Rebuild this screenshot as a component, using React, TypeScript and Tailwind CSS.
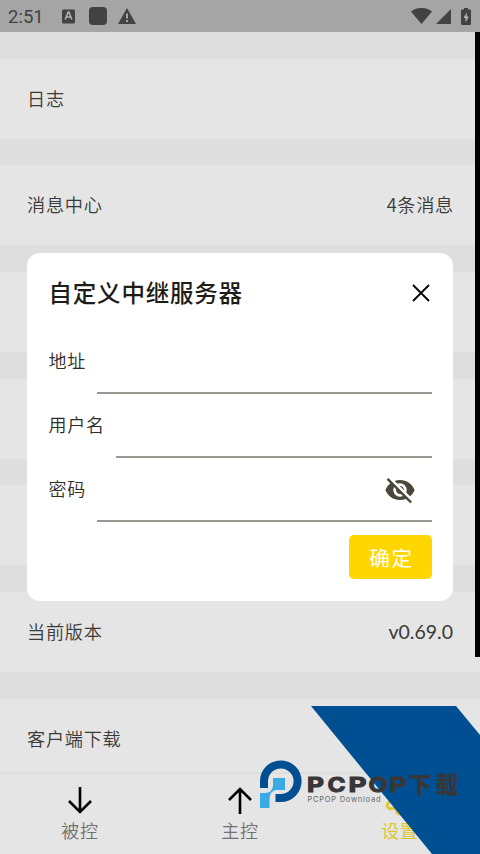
import { Settings } from "lucide-react";
import { MdVisibilityOff } from "react-icons/md";
import * as React from "react";

type SettingRowProps = {
  label?: string;
  value?: React.ReactNode;
};

const SettingRow = ({ label, value }: SettingRowProps) => (
  <div className="flex h-20 shrink-0 items-center justify-between bg-[#e5e5e5] pb-px pl-[27px] pr-[26px] text-[18.2px] font-[350] tracking-[0.7px] text-[#3a3a38]">
    <span>{label}</span>
    {value}
  </div>
);

const StatusBar = () => (
  <header className="flex h-8 shrink-0 items-center bg-[#a5a5a5] px-2 text-[#424242]">
    <span className="w-[54px] pt-px font-[Roboto] text-[18.5px] leading-8">
      2:51
    </span>
    <svg className="h-[15px] w-[13px]" viewBox="0 0 13 15">
      <rect width="13" height="14" y=".5" rx="1.5" fill="currentColor" />
      <path
        d="M3.2 10.5 6.2 3h.7l3 7.5M4.3 8h4.5"
        fill="none"
        stroke="#b4b4b4"
        strokeWidth="1.5"
      />
    </svg>
    <div className="ml-[14px] h-[18px] w-[18px] rounded-[4px] bg-[#424242]" />
    <svg className="ml-[11px] h-4 w-[18px]" viewBox="0 0 18 16">
      <path d="M9 0 18 16H0Z" fill="currentColor" />
      <path d="M9 5.5v5M9 12v2" stroke="#b0b0b0" strokeWidth="1.8" />
    </svg>
    <div className="flex-1" />
    <svg className="h-4 w-[21px]" viewBox="0 0 21 16">
      <path d="M0 3.5C6-1.2 15-1.2 21 3.5L10.5 16Z" fill="currentColor" />
    </svg>
    <svg className="ml-1 h-[15px] w-[15px]" viewBox="0 0 15 15">
      <path d="M15 0V15H0Z" fill="currentColor" />
    </svg>
    <svg className="ml-[10px] mr-[1px] h-[17px] w-[10px]" viewBox="0 0 10 17">
      <path
        d="M3 0h4v1.5h2q1 0 1 1V16q0 1-1 1H1q-1 0-1-1V2.5q0-1 1-1h2Z"
        fill="currentColor"
      />
      <path d="M5.8 4.5 2.5 10h2v4.5L7.8 8.5H5.7Z" fill="#b8b8b8" />
    </svg>
  </header>
);

type FieldProps = {
  label: string;
  children?: React.ReactNode;
};

const Field = ({ label, children }: FieldProps) => (
  <label className="flex h-16 items-end text-[18px] font-[350] tracking-[0.7px] text-[#2c2c28]">
    <span className="mb-5 mr-[11px] leading-7">{label}</span>
    <span className="flex h-16 flex-1 items-center justify-end border-b-2 border-[#99978f] pr-4">
      {children}
    </span>
  </label>
);

const RelayServerDialog = () => (
  <div
    role="dialog"
    className="absolute left-[27px] top-[253px] flex h-[348px] w-[426px] flex-col rounded-[13px] bg-white pl-[21.5px] pr-[21px]"
  >
    <div className="flex h-[77px] items-center justify-between">
      <h2 className="pt-[2px] text-[23.5px] font-medium tracking-[0.8px] text-[#1d1c16]">
        自定义中继服务器
      </h2>
      <svg
        className="mr-[2px] mt-[2px] size-[18px]"
        viewBox="0 0 18 18"
        stroke="#000"
        strokeWidth="1.8"
      >
        <path d="M1 1 17 17M17 1 1 17" />
      </svg>
    </div>
    <Field label="地址" />
    <Field label="用户名" />
    <Field label="密码">
      <MdVisibilityOff className="mt-0.5 size-8 text-[#49473a]" />
    </Field>
    <button className="mt-[13px] h-11 w-[83px] self-end rounded-[5px] bg-[#ffd600] pl-[2px] pt-px text-[20.5px] tracking-[1.5px] text-white">
      确定
    </button>
  </div>
);

const ArrowIcon = ({ d }: { d: string }) => (
  <svg
    className="h-[34px] w-6"
    viewBox="0 0 24 34"
    fill="none"
    stroke="#000"
    strokeWidth="2.6"
  >
    <path d={d} />
  </svg>
);

type TabProps = {
  label: string;
  icon: React.ReactNode;
  active?: boolean;
};

const Tab = ({ label, icon, active }: TabProps) => (
  <div
    className={`flex flex-1 flex-col items-center pt-[9px] ${
      active ? "text-[#dfc62c]" : "font-[350] text-[#707070]"
    }`}
  >
    {icon}
    <span className="text-[18px] leading-[26px] tracking-[0.7px]">{label}</span>
  </div>
);

const Watermark = () => (
  <svg
    className="absolute bottom-0 right-0 h-[148px] w-[224px]"
    viewBox="256 706 224 148"
  >
    <path d="M311 706H456L480 735V854H432Z" fill="#004f93" />
    <path
      d="M264 788V781A16.8 16.8 0 1 1 280.8 798H275.5"
      fill="none"
      stroke="#004f93"
      strokeWidth="8"
    />
    <path
      d="M274.5 778H285V790H276Q269.5 791 269.5 799V808H260V793H265.5Q273 792 273 785V778Z"
      fill="#3ba9e5"
    />
    <g
      fill="#373737"
      stroke="#373737"
      className="font-['Inter',sans-serif] text-[20px] font-bold"
    >
      <text x="307" y="791.7" textLength="17" lengthAdjust="spacingAndGlyphs">P</text>
      <text x="327.5" y="791.7" textLength="18" lengthAdjust="spacingAndGlyphs">C</text>
      <text x="348.5" y="791.7" textLength="18" lengthAdjust="spacingAndGlyphs">P</text>
      <text x="368.5" y="791.7" textLength="19" lengthAdjust="spacingAndGlyphs">O</text>
      <text x="389.5" y="791.7" textLength="17" lengthAdjust="spacingAndGlyphs">P</text>
    </g>
    <g
      fill="#373737"
      className="font-['Noto_Sans_CJK_SC',sans-serif] text-[23px] font-black"
    >
      <text x="408.5" y="793">下</text>
      <text x="435.5" y="793">载</text>
    </g>
    <text
      x="307.5"
      y="802"
      textLength="73"
      fill="#666"
      className="font-[Inter] text-[7.5px]"
    >
      PCPOP Download
    </text>
  </svg>
);

const rows: SettingRowProps[] = [
  { label: "日志" },
  { label: "消息中心", value: <span>4条消息</span> },
  {},
  {},
  {},
  {
    label: "当前版本",
    value: (
      <span className="pr-px font-[Lato] text-[19.5px] font-normal tracking-normal">
        v0.69.0
      </span>
    ),
  },
  { label: "客户端下载" },
];

const App = () => (
  <div className="relative flex h-[854px] w-[480px] flex-col overflow-hidden bg-[#e5e5e5] font-['Noto_Sans_CJK_SC',sans-serif]">
    <StatusBar />
    <main className="flex h-[740px] shrink-0 flex-col gap-[26.7px] overflow-hidden bg-[#dedede] pt-[26.7px]">
      {rows.map((row, i) => (
        <SettingRow key={i} {...row} />
      ))}
    </main>
    <nav className="flex h-[82px] shrink-0 border-t-2 border-[#dfdfdf] bg-[#e5e5e5]">
      <Tab label="被控" icon={<ArrowIcon d="M12 4V29M1 18 12 29 23 18" />} />
      <Tab label="主控" icon={<ArrowIcon d="M12 31V6M1 17 12 6 23 17" />} />
      <Tab
        label="设置"
        active
        icon={<Settings className="size-[34px]" strokeWidth={2} />}
      />
    </nav>
    {/* scroll bar */}
    <div className="absolute right-0 top-8 h-[625px] w-[5px] bg-black" />
    <RelayServerDialog />
    <Watermark />
  </div>
);

export default App;
